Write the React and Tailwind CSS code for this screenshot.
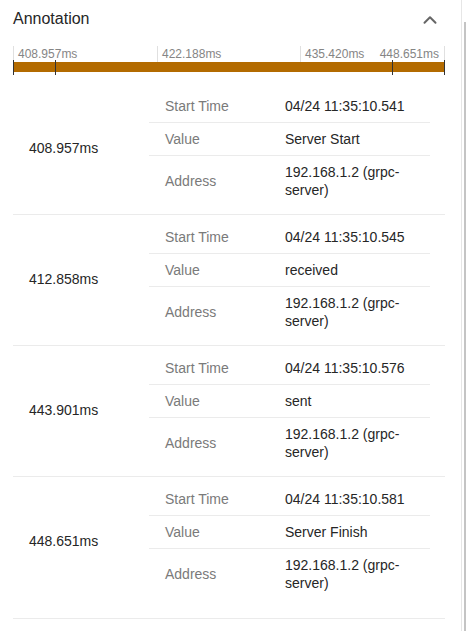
import { ChevronUp } from 'lucide-react';

const MIN = 408.957;
const MAX = 448.651;
const WIDTH = 431;

const gridLabels = ['408.957ms', '422.188ms', '435.420ms', '448.651ms'];
const gridLefts = [0, 144, 287, 431];

const annotations = [
  { offset: 408.957, time: '04/24 11:35:10.541', value: 'Server Start' },
  { offset: 412.858, time: '04/24 11:35:10.545', value: 'received' },
  { offset: 443.901, time: '04/24 11:35:10.576', value: 'sent' },
  { offset: 448.651, time: '04/24 11:35:10.581', value: 'Server Finish' },
];

const toX = (ms) => Math.round(((ms - MIN) / (MAX - MIN)) * WIDTH);

const Timeline = () => (
  <div className="relative mx-[13px] h-[38px] w-[432px]">
    {gridLefts.map((left) => (
      <div
        key={left}
        className="absolute top-0 h-[16px] w-px bg-[#e0e0e0]"
        style={{ left }}
      />
    ))}
    {gridLabels.map((label, i) =>
      i === gridLabels.length - 1 ? (
        <span
          key={label}
          className="absolute right-[6px] top-[1px] text-[12px] leading-[14px] text-[#858585]"
        >
          {label}
        </span>
      ) : (
        <span
          key={label}
          className="absolute top-[1px] text-[12px] leading-[14px] text-[#858585]"
          style={{ left: gridLefts[i] + 5 }}
        >
          {label}
        </span>
      ),
    )}
    <div className="absolute left-0 right-0 top-[16px] h-[10px] bg-[#b36b00]" />
    {annotations.map((a) => (
      <div
        key={a.offset}
        className="absolute top-[14px] h-[15px] w-px bg-[#333]"
        style={{ left: toX(a.offset) }}
      />
    ))}
  </div>
);

const SubRow = ({ label, children, last }) => (
  <div
    className={`flex items-center ${last ? '' : 'border-b border-[#ebebeb]'}`}
  >
    <div className="w-[120px] shrink-0 px-[16px] py-[7px] text-[#7a7a7a]">
      {label}
    </div>
    <div className="flex-1 px-[16px] py-[7px] text-[#262626]">
      {children}
    </div>
  </div>
);

const AnnotationRow = ({ item, last }) => (
  <div
    className={`flex pt-[6px] pb-[8px] ${last ? '' : 'border-b border-[#ebebeb]'}`}
  >
    <div className="flex w-[136px] shrink-0 items-center pl-[16px] text-[#262626]">
      {item.offset.toFixed(3)}ms
    </div>
    <div className="w-[281px] shrink-0">
      <SubRow label="Start Time">{item.time}</SubRow>
      <SubRow label="Value">{item.value}</SubRow>
      <SubRow label="Address" last>
        192.168.1.2 (grpc-server)
      </SubRow>
    </div>
  </div>
);

const App = () => {
  return (
    <div
      className="flex h-[631px] w-[466px] overflow-hidden bg-white text-[14px] leading-[18px]"
      style={{ fontFamily: '"Liberation Sans", Arial, sans-serif' }}
    >
      <div className="w-[461px] shrink-0">
        <div className="flex h-[46px] items-start justify-between pl-[13px] pr-[20px] pt-[7px]">
          <span className="text-[16px] leading-[24px] text-[#262626]">
            Annotation
          </span>
          <ChevronUp
            size={22}
            strokeWidth={2.2}
            className="mt-[2px] text-[#666]"
          />
        </div>
        <Timeline />
        <div className="mx-[13px] w-[432px] border-b border-[#ebebeb] pb-[11px]">
          {annotations.map((item, i) => (
            <AnnotationRow
              key={item.offset}
              item={item}
              last={i === annotations.length - 1}
            />
          ))}
        </div>
      </div>
      <div className="flex h-full w-[5px] border-l border-[#e6e6e6] pt-[22px]">
        <div className="ml-[2px] h-full w-[2px] bg-[#c4c4c4]" />
      </div>
    </div>
  );
};

export default App;
